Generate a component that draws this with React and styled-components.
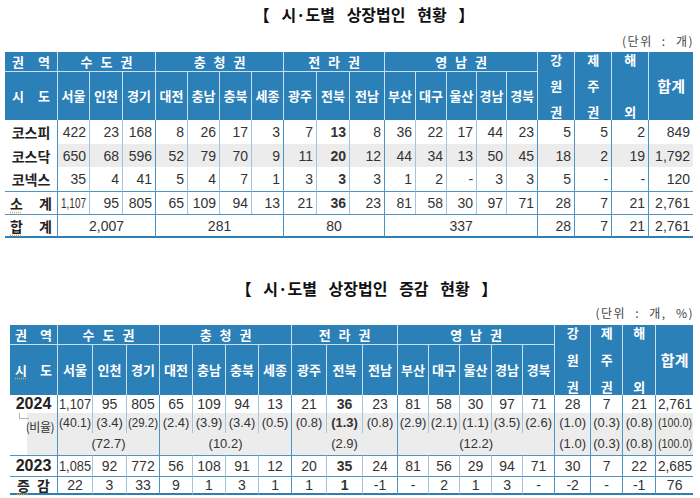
import styled, { createGlobalStyle, css } from "styled-components";

const BLUE = "#2b80b7";
const HEAD_RULE = "#c9e0f0";
const SOFT = "#a3c6dd";
const HARD = "#4c96c5";
const SHADE = "#ececec";
const KR = `"Noto Sans CJK KR", "Liberation Sans", sans-serif`;
const NUM = `"Liberation Sans", "Noto Sans CJK KR", sans-serif`;

const CITIES = ["서울", "인천", "경기", "대전", "충남", "충북", "세종", "광주", "전북", "전남", "부산", "대구", "울산", "경남", "경북"];
const GROUPS = [
  { name: "수 도 권", span: 3 },
  { name: "충 청 권", span: 4 },
  { name: "전 라 권", span: 3 },
  { name: "영 남 권", span: 5 },
];
const EXTRAS = [["강", "원", "권"], ["제", "주", "권"], ["해", "외"]];
// column index (label column = 0) followed by a darker rule
const HARD_AFTER = new Set([0, 3, 7, 10, 15, 16, 17, 18]);
const BOLD_COL = 9; // 전북

const COLS1 = [53, 32, 33, 33, 32, 32, 32, 32, 33, 33, 35, 31, 31, 30, 30, 31, 37, 37, 37, 44];
const COLS2 = [48, 35, 34, 33, 33, 33, 33, 33, 35, 36, 35, 31, 31, 32, 31, 32, 36, 32, 33, 37];

const LISTED = [
  { label: "코스피", h: 24, cells: ["422", "23", "168", "8", "26", "17", "3", "7", "13", "8", "36", "22", "17", "44", "23", "5", "5", "2", "849"] },
  { label: "코스닥", h: 23, shade: true, cells: ["650", "68", "596", "52", "79", "70", "9", "11", "20", "12", "44", "34", "13", "50", "45", "18", "2", "19", "1,792"] },
  { label: "코넥스", h: 24, cells: ["35", "4", "41", "5", "4", "7", "1", "3", "3", "3", "1", "2", "-", "3", "3", "5", "-", "-", "120"] },
];
const SUBTOTAL = ["1,107", "95", "805", "65", "109", "94", "13", "21", "36", "23", "81", "58", "30", "97", "71", "28", "7", "21", "2,761"];
const TOTAL = [["2,007", 3], ["281", 4], ["80", 3], ["337", 5], "28", "7", "21", "2,761"];

const Y2024 = ["1,107", "95", "805", "65", "109", "94", "13", "21", "36", "23", "81", "58", "30", "97", "71", "28", "7", "21", "2,761"];
const SHARE = ["(40.1)", "(3.4)", "(29.2)", "(2.4)", "(3.9)", "(3.4)", "(0.5)", "(0.8)", "(1.3)", "(0.8)", "(2.9)", "(2.1)", "(1.1)", "(3.5)", "(2.6)", "(1.0)", "(0.3)", "(0.8)", "(100.0)"];
const SHARE_GROUP = [["(72.7)", 3], ["(10.2)", 4], ["(2.9)", 3], ["(12.2)", 5], "(1.0)", "(0.3)", "(0.8)", "(100.0)"];
const Y2023 = ["1,085", "92", "772", "56", "108", "91", "12", "20", "35", "24", "81", "56", "29", "94", "71", "30", "7", "22", "2,685"];
const DIFF = ["22", "3", "33", "9", "1", "3", "1", "1", "1", "-1", "-", "2", "1", "3", "-", "-2", "-", "-1", "76"];

const measure = (() => {
  const ctx = document.createElement("canvas").getContext("2d");
  return (text, font) => {
    ctx.font = font;
    return ctx.measureText(text).width;
  };
})();

const GlobalStyle = createGlobalStyle`
  html, body { margin: 0; padding: 0; background: #fff; }
  body { font-family: ${NUM}; color: #333; }
`;

const Page = styled.div`
  width: 700px;
  height: 498px;
  overflow: hidden;
  display: flex;
  flex-direction: column;
`;

const Block = styled.section`
  display: flex;
  flex-direction: column;
  padding: ${(p) => p.$top}px 7px 0 ${(p) => p.$left}px;
`;

const Title = styled.h2`
  margin: 0;
  padding-left: 30px;
  font: bold 16px/28px ${KR};
  color: #111;
  text-align: center;
  word-spacing: 8px;
`;

const Unit = styled.div`
  margin-top: ${(p) => p.$gap}px;
  font: 12px/16px ${KR};
  color: #444;
  text-align: right;
  letter-spacing: 1.5px;
  word-spacing: 5px;
  margin-right: -1px;
`;

const Grid = styled.table`
  margin-top: ${(p) => p.$gap}px;
  width: ${(p) => p.$w}px;
  border-collapse: separate;
  border-spacing: 0;
  table-layout: fixed;
`;

const Col = styled.col`
  width: ${(p) => p.$w}px;
`;

const HeadRow = styled.tr`
  height: ${(p) => p.$h}px;
`;

const Head = styled.th`
  background: ${BLUE};
  color: #fff;
  font: bold ${(p) => (p.$big ? 15 : 13)}px/16px ${KR};
  padding: 0;
  text-align: center;
  white-space: nowrap;
  word-spacing: ${(p) => (p.$airy ? 5 : 0)}px;
  border-right: ${(p) => (p.$last ? "none" : `1px solid ${HEAD_RULE}`)};
  border-bottom: ${(p) => (p.$split ? `1px solid ${HEAD_RULE}` : "none")};
`;

const Spread = styled.span`
  display: flex;
  justify-content: space-between;
  padding: 0 ${(p) => p.$pad}px;
`;

const Stack = styled.span`
  display: flex;
  flex-direction: column;
  justify-content: space-between;
  align-items: center;
  height: ${(p) => p.$h}px;
  line-height: 14px;
`;

const Mark = styled.span`
  text-decoration: underline dotted #e7a43b;
  text-underline-offset: 3px;
`;

const Row = styled.tr`
  height: ${(p) => p.$h}px;
  background: ${(p) => (p.$shade ? SHADE : "transparent")};
`;

const edges = css`
  border-top: ${(p) => (p.$rule ? `1px solid ${HARD}` : "none")};
  border-bottom: ${(p) => (p.$foot ? `2px solid ${BLUE}` : "none")};
`;

const Side = styled.th`
  ${edges};
  padding: 0;
  background: #fff;
  color: #222;
  font: bold ${(p) => p.$size}px/16px ${(p) => (p.$num ? NUM : KR)};
  text-align: center;
  white-space: nowrap;
  border-right: 1px solid ${HARD};
`;

const Cell = styled.td`
  ${edges};
  padding: 0 ${(p) => p.$pad}px;
  color: #333;
  font: ${(p) => (p.$bold ? "bold" : "normal")} ${(p) => p.$size}px/16px ${NUM};
  text-align: ${(p) => (p.$center ? "center" : "right")};
  white-space: nowrap;
  border-right: ${(p) => (p.$edge ? "none" : `1px solid ${p.$hard ? HARD : SOFT}`)};
`;

const RatioSide = styled.th`
  padding: 0;
  vertical-align: top;
  background: linear-gradient(to right, #fff 17px, ${SHADE} 17px);
  border-right: 1px solid ${HARD};
`;

const Hook = styled.span`
  display: block;
  width: 9px;
  height: 5px;
  margin-left: 9px;
  border-left: 1px solid #b4b4b4;
  border-bottom: 1px solid #b4b4b4;
`;

const RatioText = styled.span`
  display: block;
  padding-right: 3px;
  font: 12px/16px ${KR};
  color: #333;
  text-align: right;
  letter-spacing: -0.5px;
`;

const Squeeze = styled.span`
  display: inline-block;
  white-space: nowrap;
  text-align: left;
`;

const SqueezeText = styled.span`
  display: inline-block;
  transform-origin: 0 50%;
`;

function Num({ value, room, size, bold }) {
  const natural = measure(value, `${bold ? "bold " : ""}${size}px "Liberation Sans"`);
  if (natural <= room) return value;
  return (
    <Squeeze style={{ width: room }}>
      <SqueezeText style={{ transform: `scaleX(${room / natural})` }}>{value}</SqueezeText>
    </Squeeze>
  );
}

function Cells({ cells, cols, pad, size, center, rule, foot }) {
  let col = 1;
  return cells.map((c, i) => {
    const [value, span] = Array.isArray(c) ? c : [c, 1];
    const start = col;
    const end = col + span - 1;
    col += span;
    const width = cols.slice(start, end + 1).reduce((a, b) => a + b, 0);
    const bold = span === 1 && start === BOLD_COL;
    return (
      <Cell
        key={i}
        colSpan={span}
        $pad={pad}
        $size={size}
        $bold={bold}
        $center={center || span > 1}
        $hard={HARD_AFTER.has(end)}
        $edge={end === cols.length - 1}
        $rule={rule}
        $foot={foot}
      >
        <Num value={value} room={width - pad * 2 - 1} size={size} bold={bold} />
      </Cell>
    );
  });
}

function Header({ pad, rows, markCity }) {
  return (
    <thead>
      <HeadRow $h={rows[0]}>
        <Head $split>
          <Spread $pad={pad}>
            <span>권</span>
            <span>역</span>
          </Spread>
        </Head>
        {GROUPS.map((g) => (
          <Head key={g.name} colSpan={g.span} $split $airy>
            {g.name}
          </Head>
        ))}
        {EXTRAS.map((chars) => (
          <Head key={chars.join("")} rowSpan={2}>
            <Stack $h={rows[0] + rows[1] - 2}>
              {chars.map((c) => (
                <span key={c}>{c}</span>
              ))}
            </Stack>
          </Head>
        ))}
        <Head rowSpan={2} $last $big>
          합계
        </Head>
      </HeadRow>
      <HeadRow $h={rows[1]}>
        <Head>
          <Spread $pad={pad}>
            {markCity ? <Mark>시</Mark> : <span>시</span>}
            <span>도</span>
          </Spread>
        </Head>
        {CITIES.map((c) => (
          <Head key={c}>{c}</Head>
        ))}
      </HeadRow>
    </thead>
  );
}

function ListedTable() {
  const cellProps = { cols: COLS1, pad: 3, size: 14 };
  return (
    <Grid $gap={3} $w={688}>
      <colgroup>
        {COLS1.map((w, i) => (
          <Col key={i} $w={w} />
        ))}
      </colgroup>
      <Header pad={7} rows={[20, 48]} />
      <tbody>
        {LISTED.map((r) => (
          <Row key={r.label} $h={r.h} $shade={r.shade}>
            <Side $size={14}>{r.label}</Side>
            <Cells cells={r.cells} {...cellProps} />
          </Row>
        ))}
        <Row $h={23}>
          <Side $size={14} $rule>
            <Spread $pad={5}>
              <Mark>소</Mark>
              <span>계</span>
            </Spread>
          </Side>
          <Cells cells={SUBTOTAL} {...cellProps} rule />
        </Row>
        <Row $h={24}>
          <Side $size={14} $rule $foot>
            <Spread $pad={5}>
              <Mark>합</Mark>
              <span>계</span>
            </Spread>
          </Side>
          <Cells cells={TOTAL} {...cellProps} rule foot />
        </Row>
      </tbody>
    </Grid>
  );
}

function ChangeTable() {
  const cellProps = { cols: COLS2, pad: 1, size: 14, center: true };
  return (
    <Grid $gap={4} $w={683}>
      <colgroup>
        {COLS2.map((w, i) => (
          <Col key={i} $w={w} />
        ))}
      </colgroup>
      <Header pad={5} rows={[20, 50]} markCity />
      <tbody>
        <Row $h={18}>
          <Side $size={16} $num>
            2024
          </Side>
          <Cells cells={Y2024} {...cellProps} />
        </Row>
        <Row $h={20} $shade>
          <RatioSide rowSpan={2}>
            <Hook />
            <RatioText>(비율)</RatioText>
          </RatioSide>
          <Cells cells={SHARE} {...cellProps} size={13} />
        </Row>
        <Row $h={22} $shade>
          <Cells cells={SHARE_GROUP} {...cellProps} size={13} />
        </Row>
        <Row $h={21}>
          <Side $size={16} $num $rule>
            2023
          </Side>
          <Cells cells={Y2023} {...cellProps} rule />
        </Row>
        <Row $h={19}>
          <Side $size={14} $rule $foot>
            <Spread $pad={7}>
              <Mark>증</Mark>
              <span>감</span>
            </Spread>
          </Side>
          <Cells cells={DIFF} {...cellProps} rule foot />
        </Row>
      </tbody>
    </Grid>
  );
}

export default function App() {
  return (
    <Page>
      <GlobalStyle />
      <Block $top={0} $left={5}>
        <Title>【 시·도별 상장법인 현황 】</Title>
        <Unit $gap={5}>(단위 : 개)</Unit>
        <ListedTable />
      </Block>
      <Block $top={36} $left={10}>
        <Title>【 시·도별 상장법인 증감 현황 】</Title>
        <Unit $gap={3}>(단위 : 개, %)</Unit>
        <ChangeTable />
      </Block>
    </Page>
  );
}
